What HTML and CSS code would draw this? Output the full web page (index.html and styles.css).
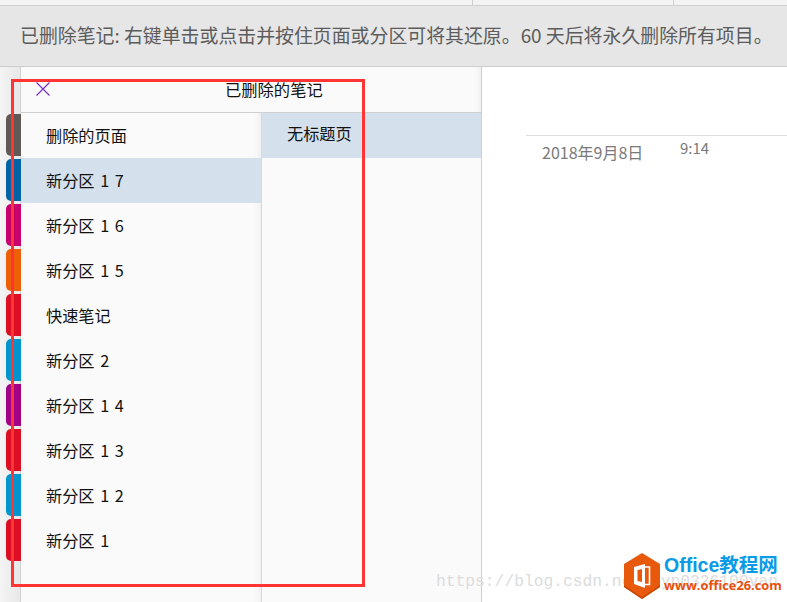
FILE: index.html

```html
<!DOCTYPE html>
<html lang="zh-CN">
<head>
    <meta charset="UTF-8">
    <title>已删除的笔记</title>
    <link rel="stylesheet" href="styles.css">
</head>
<body>
    <div class="top-strip">
        <div class="strip-cell strip-a"></div>
        <div class="strip-cell strip-b"></div>
        <div class="strip-cell strip-c"></div>
    </div>
    <div class="notice">已删除笔记: 右键单击或点击并按住页面或分区可将其还原。60 天后将永久删除所有项目。</div>

    <div class="main">
        <div class="rail">
            <div class="tab tab-grey"></div>
            <div class="tab tab-blue"></div>
            <div class="tab tab-pink"></div>
            <div class="tab tab-orange"></div>
            <div class="tab tab-red"></div>
            <div class="tab tab-cyan"></div>
            <div class="tab tab-purple"></div>
            <div class="tab tab-red"></div>
            <div class="tab tab-cyan"></div>
            <div class="tab tab-red"></div>
        </div>

        <div class="panel">
            <div class="panel-head">
                <svg class="close" width="16" height="16" viewBox="0 0 16 16">
                    <path d="M1.5 1.5L14.5 14.5M14.5 1.5L1.5 14.5" stroke="#7b2fc0" stroke-width="1.2" fill="none"/>
                </svg>
                <div class="panel-title">已删除的笔记</div>
            </div>
            <div class="panel-body">
                <div class="sections">
                    <div class="row">删除的页面</div>
                    <div class="row selected">新分区 1 7</div>
                    <div class="row">新分区 1 6</div>
                    <div class="row">新分区 1 5</div>
                    <div class="row">快速笔记</div>
                    <div class="row">新分区 2</div>
                    <div class="row">新分区 1 4</div>
                    <div class="row">新分区 1 3</div>
                    <div class="row">新分区 1 2</div>
                    <div class="row">新分区 1</div>
                </div>
                <div class="pages">
                    <div class="page-row">无标题页</div>
                </div>
            </div>
        </div>

        <div class="content">
            <div class="rule"></div>
            <div class="stamp">
                <span class="stamp-date">2018年9月8日</span>
                <span class="stamp-time">9:14</span>
            </div>
        </div>
    </div>

    <!-- annotation and watermarks sit over the screenshot -->
    <div class="red-box"></div>
    <div class="watermark">https://blog.csdn.net/yyp0326100van</div>
    <div class="logo">
        <svg width="38" height="46" viewBox="0 0 38 46">
            <path d="M19 0L37 11V34L19 46L1 34V11Z" fill="#e8590c"/>
            <path d="M1 32L19 44L37 32V34L19 46L1 34Z" fill="#c94a08"/>
            <path d="M11 14L22 11V35L11 31Z" fill="#fff"/>
            <path d="M22 14H26.5V31.5H22" fill="none" stroke="#fff" stroke-width="1.6"/>
            <path d="M14.5 17L19 16V29L14.5 28Z" fill="#e8590c"/>
        </svg>
        <div class="logo-text">
            <div class="logo-name">Office教程网</div>
            <div class="logo-url">www.office26.com</div>
        </div>
    </div>
</body>
</html>
```

FILE: styles.css

```css
html, body {
    margin: 0;
    height: 100%;
    overflow: hidden;
}
body {
    font-family: "Noto Sans CJK SC", "Noto Sans", sans-serif;
    background-color: #fff;
    color: #1a1a1a;
    display: flex;
    flex-direction: column;
    position: relative;
}
.top-strip {
    height: 5px;
    flex: none;
    display: flex;
    background-color: #f3f3f3;
    border-bottom: 1px solid #cfcfcf;
}
.strip-a {
    width: 472px;
    border-right: 1px solid #cfcfcf;
}
.strip-b {
    width: 200px;
    border-right: 1px solid #cfcfcf;
}
.strip-c {
    flex: 1;
}
.notice {
    height: 61px;
    flex: none;
    box-sizing: border-box;
    padding-left: 20px;
    line-height: 57px;
    font-size: 18.9px;
    color: #5c5c5c;
    background-color: #e6e6e6;
    border-bottom: 1px solid #cdcdcd;
    white-space: nowrap;
}
.main {
    flex: 1;
    display: flex;
    min-height: 0;
}
.rail {
    width: 21px;
    flex: none;
    box-sizing: border-box;
    padding: 47px 0 0 6px;
    background: linear-gradient(to right, #f4f4f4, #e8e8e8);
    border-right: 1px solid #d2d2d2;
    display: flex;
    flex-direction: column;
    gap: 3px;
}
.tab {
    height: 42px;
    width: 15px;
    border-radius: 5px 0 0 5px;
    flex: none;
}
.tab-grey { background-color: #5f5a55; }
.tab-blue { background-color: #0063a6; }
.tab-pink { background-color: #c8006e; }
.tab-orange { background-color: #ee6007; }
.tab-red { background-color: #dc0f25; }
.tab-cyan { background-color: #0095cf; }
.tab-purple { background-color: #a3008a; }
.panel {
    width: 460px;
    flex: none;
    display: flex;
    flex-direction: column;
    background-color: #fafafa;
    border-right: 1px solid #cfcfcf;
}
.panel-head {
    height: 45px;
    flex: none;
    position: relative;
    border-bottom: 1px solid #cfcfcf;
    box-shadow: inset -8px 0 8px -8px rgba(0, 0, 0, 0.08);
}
.close {
    position: absolute;
    left: 14px;
    top: 14px;
}
.panel-title {
    font-size: 16.3px;
    line-height: 45px;
    padding-left: 204px;
    color: #111;
}
.panel-body {
    flex: 1;
    display: flex;
}
.sections {
    width: 240px;
    flex: none;
    border-right: 1px solid #d8d8d8;
    box-shadow: inset -8px 0 8px -8px rgba(0, 0, 0, 0.08);
}
.row {
    height: 45px;
    line-height: 45px;
    padding-left: 25px;
    font-size: 16.2px;
    word-spacing: 2px;
    color: #111;
}
.selected {
    background-color: #d4e1ed;
}
.pages {
    flex: 1;
}
.page-row {
    height: 45px;
    line-height: 41px;
    padding-left: 25px;
    font-size: 16.2px;
    color: #111;
    background-color: #d4e1ed;
}
.content {
    flex: 1;
    padding-left: 44px;
    background-color: #fff;
}
.rule {
    height: 1px;
    margin-top: 68px;
    background-color: #dedede;
}
.stamp {
    display: flex;
    padding-left: 16px;
    color: #7a7a7a;
    font-size: 16px;
}
.stamp-date {
    width: 138px;
    line-height: 32px;
}
.stamp-time {
    font-size: 15px;
    line-height: 24px;
}
.red-box {
    position: absolute;
    left: 11px;
    top: 79px;
    width: 348px;
    height: 502px;
    border: 3px solid #ff3535;
}
.watermark {
    position: absolute;
    left: 436px;
    top: 572px;
    font-family: "Liberation Mono", monospace;
    font-size: 16.3px;
    line-height: 20px;
    color: #dcdcdc;
    white-space: nowrap;
}
.logo {
    position: absolute;
    left: 623px;
    top: 553px;
    display: flex;
    gap: 3px;
}
.logo-text {
    font-family: "Open Sans", "Noto Sans CJK SC", sans-serif;
    font-weight: 700;
}
.logo-name {
    font-size: 19.5px;
    line-height: 25px;
    color: #0a9be6;
    font-family: "Liberation Sans", "Noto Sans CJK SC", sans-serif;
}
.logo-url {
    font-size: 12.8px;
    line-height: 15px;
    color: #e8500c;
}
```
